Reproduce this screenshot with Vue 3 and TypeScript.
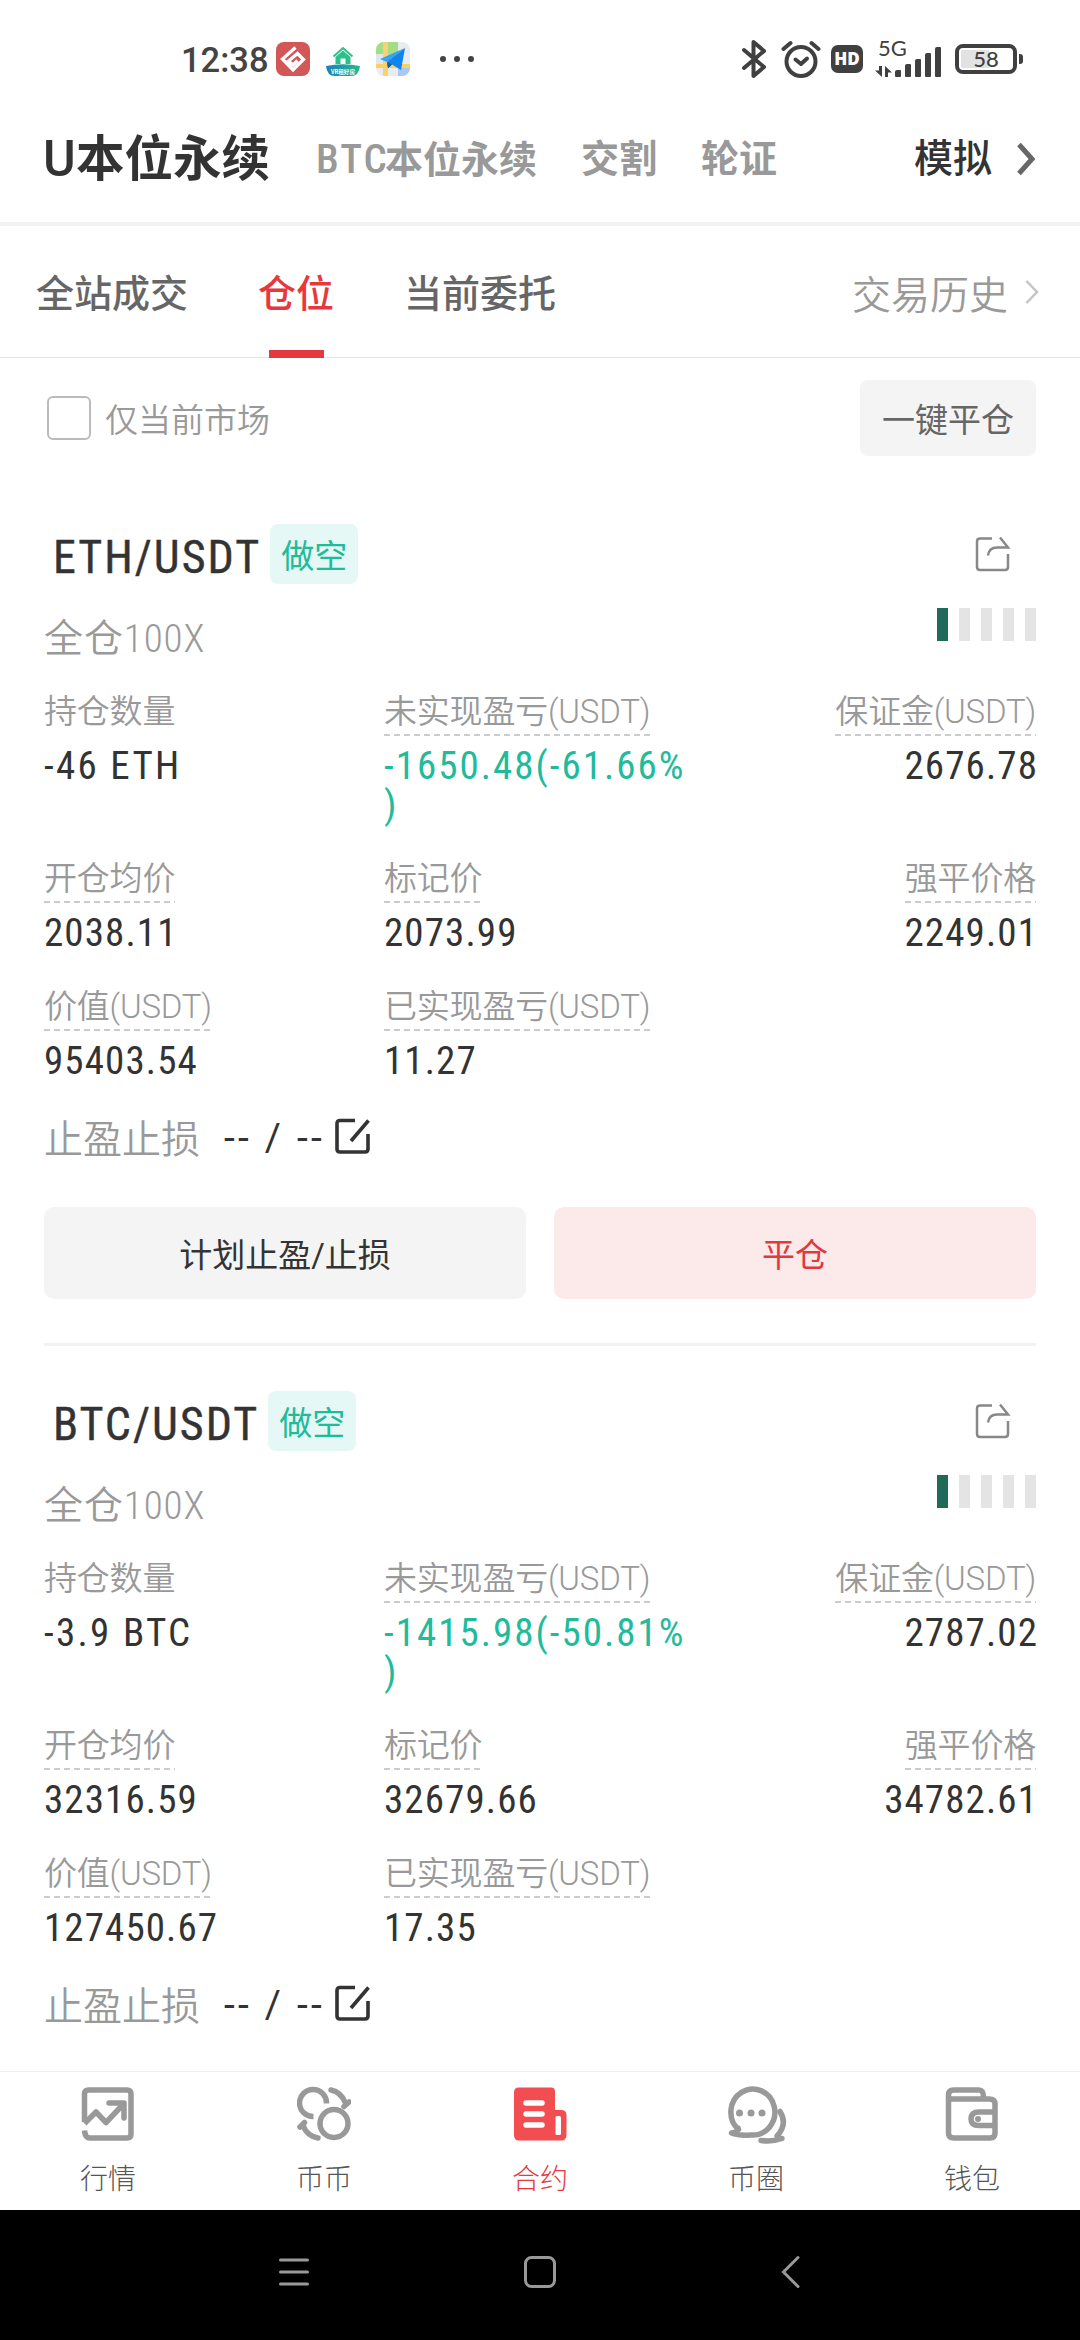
<script setup lang="ts">
interface Market {
  code: string
  name: string
}

interface Metric {
  label: string
  value: string
  dashed: boolean
  tone?: 'gain' | 'amount'
}

interface Position {
  pair: string
  side: string
  leverage: string
  actions: boolean
  metrics: Metric[]
}

const markets: Market[] = [
  { code: 'U', name: '本位永续' },
  { code: 'BTC', name: '本位永续' },
  { code: '', name: '交割' },
  { code: '', name: '轮证' },
]
const orderTabs: string[] = ['全站成交', '仓位', '当前委托']
const signalBars: number[] = [7, 13, 18, 24, 30]

const positions: Position[] = [
  {
    pair: 'ETH/USDT',
    side: '做空',
    leverage: '全仓100X',
    actions: true,
    metrics: [
      { label: '持仓数量', value: '-46 ETH', dashed: false, tone: 'amount' },
      { label: '未实现盈亏(USDT)', value: '-1650.48(-61.66%\n)', dashed: true, tone: 'gain' },
      { label: '保证金(USDT)', value: '2676.78', dashed: true },
      { label: '开仓均价', value: '2038.11', dashed: true },
      { label: '标记价', value: '2073.99', dashed: true },
      { label: '强平价格', value: '2249.01', dashed: true },
      { label: '价值(USDT)', value: '95403.54', dashed: true },
      { label: '已实现盈亏(USDT)', value: '11.27', dashed: true },
    ],
  },
  {
    pair: 'BTC/USDT',
    side: '做空',
    leverage: '全仓100X',
    actions: false,
    metrics: [
      { label: '持仓数量', value: '-3.9 BTC', dashed: false, tone: 'amount' },
      { label: '未实现盈亏(USDT)', value: '-1415.98(-50.81%\n)', dashed: true, tone: 'gain' },
      { label: '保证金(USDT)', value: '2787.02', dashed: true },
      { label: '开仓均价', value: '32316.59', dashed: true },
      { label: '标记价', value: '32679.66', dashed: true },
      { label: '强平价格', value: '34782.61', dashed: true },
      { label: '价值(USDT)', value: '127450.67', dashed: true },
      { label: '已实现盈亏(USDT)', value: '17.35', dashed: true },
    ],
  },
]
</script>

<template>
  <div class="screen">
    <header class="status">
      <div class="status-left">
        <span class="clock">12:38</span>
        <svg class="app-icon" viewBox="0 0 34 34">
          <rect width="34" height="34" rx="8" fill="#d25757" />
          <path d="M19.500 5.500 L6.500 17 L17 28 L27.500 17.500 L21.500 11.500 L12.500 19 L17 23 L21.500 18.500" fill="none" stroke="#fff" stroke-width="3.300" />
        </svg>
        <svg class="app-icon" viewBox="0 0 34 34">
          <path d="M7.500 14.500 L17 6 L26.500 14.500" fill="none" stroke="#2cc08d" stroke-width="2" />
          <path d="M9.500 15 L17 8.500 L24.500 15 V22 H19.500 V16.500 H14.500 V22 H9.500Z" fill="#2cc08d" />
          <path d="M0 24 Q17 20.500 34 24 Q33 34 25 34 H9 Q1 34 0 24Z" fill="url(#vr)" />
          <defs>
            <linearGradient id="vr"><stop stop-color="#1585b8" /><stop offset="1" stop-color="#25b98f" /></linearGradient>
          </defs>
          <text x="17" y="31.500" text-anchor="middle" font-size="5.600" font-weight="700" fill="#fff" class="vr-text">VR租好房</text>
        </svg>
        <svg class="app-icon" viewBox="0 0 34 34">
          <defs><clipPath id="map"><rect width="34" height="34" rx="8" /></clipPath></defs>
          <g clip-path="url(#map)">
            <rect width="34" height="34" fill="#e9ecee" />
            <rect width="22" height="22" fill="#a4dd84" />
            <rect y="12" width="7" height="10" fill="#e2e6e8" />
            <rect x="7" width="5" height="34" fill="#fad075" />
            <rect y="22" width="34" height="4" fill="#fad060" />
            <rect x="22" y="26" width="12" height="8" fill="#a9c8f5" />
          </g>
          <path d="M29 6 L4 17 L11 20Z" fill="#3aa0f5" />
          <path d="M29 6 L11 20 L12 26 L16 22.500 L25 28Z" fill="#0d84ee" />
          <path d="M11 20 L12 26.500 L16 22.500Z" fill="#075fae" />
        </svg>
        <svg class="more" viewBox="0 0 36 8" fill="#444">
          <circle cx="4" cy="4" r="3" /><circle cx="18" cy="4" r="3" /><circle cx="32" cy="4" r="3" />
        </svg>
      </div>
      <div class="status-right">
        <svg width="26" height="40" viewBox="0 0 26 40" fill="none" stroke="#404040" stroke-width="4" stroke-linecap="round" stroke-linejoin="round">
          <path d="M3 11 L23 28 L12.500 37 V3 L23 12 L3 29" />
        </svg>
        <svg class="alarm" width="40" height="38" viewBox="0 0 40 38" fill="none" stroke="#404040" stroke-width="4" stroke-linecap="round">
          <circle cx="20" cy="21.500" r="14.500" />
          <path d="M14.500 19.500 L20 24 L26 18.500" stroke-linejoin="round" />
          <path d="M2.500 9 L9.500 3 M37.500 9 L30.500 3" />
        </svg>
        <span class="hd">HD</span>
        <div class="cell">
          <span class="gen">5G</span>
          <svg width="17" height="11" viewBox="0 0 17 11" fill="#404040">
            <path d="M4 0 H7 V11 L0 4.500 H4Z M10 11 V0 L17 6.500 H13 V11Z" />
          </svg>
        </div>
        <div class="bars">
          <i v-for="h in signalBars" :key="h" :style="{ height: h + 'px' }"></i>
        </div>
        <div class="battery"><span>58</span></div>
        <i class="tip"></i>
      </div>
    </header>

    <nav class="markets">
      <span v-for="(m, i) in markets" :key="m.code + m.name" :class="['market', { current: i === 0 }]"><span v-if="m.code" class="code">{{ m.code }}</span>{{ m.name }}</span>
      <span class="demo">模拟</span>
      <svg class="demo-arrow" width="20" height="34" viewBox="0 0 20 34" fill="none" stroke="#666" stroke-width="5">
        <path d="M3 2.500 L16 17 L3 31.500" />
      </svg>
    </nav>

    <nav class="orders">
      <span v-for="(t, i) in orderTabs" :key="t" :class="['order', { active: i === 1 }]">{{ t }}</span>
      <span class="history">交易历史</span>
      <svg class="history-arrow" width="14" height="24" viewBox="0 0 14 24" fill="none" stroke="#c4c4c4" stroke-width="2.500">
        <path d="M1.500 1 L12 12 L1.500 23" />
      </svg>
    </nav>

    <main class="body">
      <div class="filter">
        <i class="check"></i>
        <span class="filter-text">仅当前市场</span>
        <button class="close-all">一键平仓</button>
      </div>

      <section v-for="p in positions" :key="p.pair" class="card">
        <div class="head">
          <span class="pair">{{ p.pair }}</span>
          <span class="side">{{ p.side }}</span>
          <svg class="share" width="36" height="36" viewBox="0 0 36 36" fill="none" stroke="#888" stroke-width="2.500">
            <path d="M17 2.500 H5 Q2 2.500 2 5.500 V31 Q2 34 5 34 H30 Q33 34 33 31 V18" />
            <path d="M13 19.500 Q14 11.500 22 11.500 H33 L25 1.500" />
          </svg>
        </div>
        <div class="lever">
          <span>{{ p.leverage }}</span>
          <div class="risk"><i v-for="n in 5" :key="n" :class="{ on: n === 1 }"></i></div>
        </div>
        <div class="grid">
          <div v-for="m in p.metrics" :key="m.label" class="metric">
            <span :class="['label', { dashed: m.dashed }]">{{ m.label }}</span>
            <span :class="['value', m.tone]">{{ m.value }}</span>
          </div>
        </div>
        <div class="stop">
          <span class="stop-label">止盈止损</span>
          <span class="stop-value">-- / --</span>
          <svg width="36" height="36" viewBox="0 0 36 36" fill="none" stroke="#333" stroke-width="3.600">
            <path d="M20 2.500 H5 Q2 2.500 2 5.500 V31 Q2 34 5 34 H30 Q33 34 33 31 V16" />
            <path d="M16 23 L33.500 2.500" />
          </svg>
        </div>
        <div v-if="p.actions" class="actions">
          <button class="plan">计划止盈/止损</button>
          <button class="close">平仓</button>
        </div>
      </section>
    </main>

    <footer class="tabs">
      <div class="tab">
        <svg viewBox="0 0 54 56" fill="none" stroke="#999" stroke-width="5.500">
          <path d="M3.500 36 V8 Q3.500 4 7.500 4 H46 Q50 4 50 8 V48 Q50 52 46 52 H9 Q4 52 3.500 44.500" />
          <path d="M3.500 37.500 L15 26 L25 36.500 L43 17.500" stroke-linejoin="round" />
          <path d="M28 17 H43 V32" stroke-linecap="round" stroke-linejoin="round" />
        </svg>
        <span>行情</span>
      </div>
      <div class="tab">
        <svg viewBox="0 0 54 56" fill="none" stroke="#999" stroke-width="5.500">
          <path d="M29.500 17.500 A13.500 13.500 0 1 0 16.500 30.500" />
          <circle cx="37" cy="37.500" r="14" />
          <path d="M34 4 Q44 6 48.500 17 M52 16 L47 20.500" stroke-linecap="round" />
          <path d="M21 52 Q10 50 6 39.500 M3 41 L7.500 36.500" stroke-linecap="round" />
        </svg>
        <span>币币</span>
      </div>
      <div class="tab on">
        <svg viewBox="0 0 54 56">
          <path d="M6 1.500 H38 Q42 1.500 42 5.500 V24 H48 Q53.500 24 53.500 29 V49 Q53.500 54.500 48 54.500 H6 Q1 54.500 1 49 V6.500 Q1 1.500 6 1.500Z" fill="#f24d50" />
          <rect x="42.500" y="30" width="5.500" height="19" rx="1.500" fill="#fff" />
          <path d="M13 17 H29 M13 28 H29 M13 39 H29" stroke="#fff" stroke-width="5.500" stroke-linecap="round" />
        </svg>
        <span>合约</span>
      </div>
      <div class="tab">
        <svg class="wide" viewBox="0 0 62 58" fill="none" stroke="#999" stroke-width="5.500" stroke-linecap="round" stroke-linejoin="round">
          <path d="M13.500 43.500 A22 23 0 1 1 26 49 Q14 50 6.500 47 Q13 46 13 42" />
          <path d="M55 25.500 Q63 38 52 50 Q52 52 57 52.500 Q47 56 36 54.500" />
          <g fill="#999" stroke="none"><circle cx="14.500" cy="27" r="3.500" /><circle cx="26" cy="27" r="3.500" /><circle cx="37" cy="27" r="3.500" /></g>
        </svg>
        <span>币圈</span>
      </div>
      <div class="tab">
        <svg viewBox="0 0 54 56" fill="none" stroke="#999" stroke-width="5.500">
          <path d="M3.500 13 H44 Q50 13 50 18 V47 Q50 52 45 52 H9 Q3.500 52 3.500 47 V9 Q3.500 4 8.500 4 H34 Q38.500 4 38.500 12" />
          <path d="M50 26 H34 Q26 26 26 33 Q26 39.500 34 39.500 H50" />
          <circle cx="33" cy="33" r="3" fill="#999" stroke="none" />
        </svg>
        <span>钱包</span>
      </div>
    </footer>

    <div class="system">
      <svg width="30" height="30" viewBox="0 0 30 30" stroke="#999" stroke-width="3" stroke-linecap="round">
        <path d="M1.500 3 H28.500 M1.500 15 H28.500 M1.500 27 H28.500" />
      </svg>
      <svg class="home" width="34" height="34" viewBox="0 0 34 34" fill="none" stroke="#999" stroke-width="3">
        <rect x="2.500" y="2.500" width="29" height="29" rx="6" />
      </svg>
      <svg width="20" height="34" viewBox="0 0 20 34" fill="none" stroke="#999" stroke-width="3" stroke-linecap="round">
        <path d="M17 2.500 L2.500 17 L17 31.500" />
      </svg>
    </div>
  </div>
</template>

<style>
body {
  background: #fff;
}
</style>

<style scoped>
.screen {
  --din: Roboto, "Noto Sans CJK SC", sans-serif;
  width: 1080px;
  height: 2340px;
  overflow: hidden;
  display: flex;
  flex-direction: column;
  background: #fff;
  color: #333;
  font-family: var(--din);
}
svg { display: block; flex: none; }
button { border: 0; padding: 0; font: inherit; color: inherit; }

.status {
  flex: none;
  height: 118px;
  display: flex;
  justify-content: space-between;
  padding: 0 57px 0 181px;
  box-sizing: border-box;
}
.status-left, .status-right { display: flex; align-items: center; height: 118px; }
.clock { font: 500 34.500px/40px Roboto, sans-serif; color: #444; width: 95px; padding-top: 2px; }
.app-icon { width: 34px; height: 34px; margin-right: 16px; }
.vr-text { font-family: "Noto Sans CJK SC", sans-serif; }
.more { width: 36px; height: 8px; margin-left: 13px; }
.alarm { margin-left: 14px; }
.hd {
  width: 32px; height: 28px; margin-left: 10px; border-radius: 7px; background: #404040;
  color: #fff; font: 800 17px/28px "Open Sans", sans-serif; text-align: center;
}
.cell { width: 18px; height: 38px; margin: 0 0 2px 12px; display: flex; flex-direction: column; justify-content: space-between; }
.gen { font: 400 22px/18px Lato, sans-serif; color: #404040; margin-left: 3px; white-space: nowrap; }
.bars { height: 36px; margin-left: 2px; display: flex; align-items: flex-end; gap: 4px; }
.bars i { width: 6px; background: #404040; border-radius: 2px 1px 1px 1px; }
.battery {
  width: 62px; height: 30px; margin-left: 14px; box-sizing: border-box; border: 4px solid #404040; border-radius: 8px;
  background: linear-gradient(90deg, #e2e2e2 28px, #fff 28px) content-box; padding: 2px;
  display: flex; align-items: center; justify-content: center;
}
.battery span { font: 500 22px/22px Lato, sans-serif; color: #404040; }
.tip { width: 4px; height: 10px; margin-left: 2px; background: #404040; border-radius: 0 3px 3px 0; }

.markets {
  flex: none;
  height: 108px;
  box-sizing: border-box;
  border-bottom: 4px solid #f2f2f2;
  padding: 0 44px 22px 43px;
  display: flex;
  align-items: center;
}
.market { font-size: 38px; font-weight: 700; line-height: 60px; color: #999; margin-right: 44px; white-space: nowrap; }
.market .code { display: inline-block; box-sizing: border-box; width: 71px; padding-left: 2px; font-size: 41px; font-weight: 500; font-stretch: 75%; letter-spacing: 2px; }
.market.current { font-size: 48.500px; color: #333; }
.market.current .code { width: 33px; padding: 0; font-size: 50px; font-weight: 500; font-stretch: 100%; letter-spacing: 0; }
.demo { margin-left: auto; font-size: 39px; font-weight: 500; line-height: 60px; }
.demo-arrow { margin-left: 24px; }

.orders {
  flex: none;
  height: 132px;
  box-sizing: border-box;
  border-bottom: 1px solid #e4e4e4;
  padding: 0 41px 0 36px;
  display: flex;
  align-items: center;
}
.order { position: relative; font-size: 38px; font-weight: 500; color: #666; height: 131px; line-height: 137px; margin-right: 70px; }
.order.active { color: #e6393d; }
.order.active::after {
  content: ""; position: absolute; left: 50%; bottom: -1px; width: 55px; height: 8px; margin-left: -27px; background: #e6393d;
}
.history { margin-left: auto; font-size: 39px; color: #999; font-weight: 350; }
.history-arrow { margin-left: 17px; }

.body { flex: 1; min-height: 0; overflow: hidden; padding: 22px 44px 0; }
.filter { display: flex; align-items: center; height: 76px; margin-bottom: 68px; }
.check { width: 44px; height: 44px; box-sizing: border-box; border: 2px solid #bbb; border-radius: 6px; margin: 0 14px 0 3px; }
.filter-text { font-size: 33px; color: #999; font-weight: 350; }
.close-all { margin-left: auto; width: 176px; height: 76px; border-radius: 8px; background: #f4f4f4; color: #666; font-size: 33px; }

.card { height: 819px; border-bottom: 3px solid #f2f2f2; margin-bottom: 45px; }
.head { display: flex; align-items: center; height: 60px; }
.pair { font: 400 46px/60px Roboto, sans-serif; font-stretch: 75%; letter-spacing: 2px; -webkit-text-stroke: 0.400px #333; padding-top: 5px; margin-left: 9px; white-space: nowrap; }
.side { width: 88px; height: 60px; margin-left: 9px; border-radius: 8px; background: #e6f8f5; color: #1fbb9b; font-size: 33px; line-height: 65px; text-align: center; }
.share { margin: 0 25px 0 auto; }
.lever { display: flex; justify-content: space-between; height: 60px; margin-top: 24px; font-size: 39px; line-height: 62px; color: #999; font-weight: 350; font-stretch: 75%; letter-spacing: 0.900px; }
.risk { display: flex; gap: 11px; }
.risk i { width: 11px; height: 33px; background: #e4e4e4; }
.risk i.on { background: #216a58; }
.grid { display: grid; grid-template-columns: 340px 312px 1fr; margin-top: 20px; row-gap: 20px; }
.metric { display: flex; flex-direction: column; align-items: flex-start; }
.metric:nth-child(3n) { align-items: flex-end; }
.label { font-size: 33px; line-height: 47px; height: 48px; color: #999; font-weight: 350; letter-spacing: -0.200px; }
.label.dashed { background: repeating-linear-gradient(90deg, #ccc 0 6px, transparent 6px 10px) 0 100% / 100% 2px no-repeat; }
.value { font-size: 39px; line-height: 39px; margin-top: 11px; margin-bottom: 10px; font-stretch: 75%; letter-spacing: 1.100px; white-space: pre-line; }
.metric:nth-child(3n) .value { margin-right: -2px; }
.value.gain { color: #1fbb9b; letter-spacing: 2px; }
.value.amount { letter-spacing: 2.300px; }
.stop { display: flex; align-items: center; height: 60px; margin-top: 15px; }
.stop-label { font-size: 39px; color: #999; width: 180px; font-weight: 350; }
.stop-value { font-size: 39px; width: 111px; white-space: pre; letter-spacing: 3.200px; padding-top: 3px; }
.actions { display: flex; gap: 28px; margin-top: 41px; }
.actions button { flex: 1; height: 92px; border-radius: 10px; font-size: 33px; background: #f4f4f4; color: #333; }
.actions .close { background: #fce9ea; color: #e0393e; }

.tabs { flex: none; height: 139px; box-sizing: border-box; border-top: 1px solid #eee; display: flex; background: #fff; }
.tab { flex: 1; display: flex; flex-direction: column; align-items: center; padding-top: 14px; font-size: 28px; line-height: 40px; color: #555; font-weight: 300; }
.tab svg { width: 54px; height: 56px; margin-bottom: 18px; }
.tab svg.wide { width: 62px; height: 58px; margin-bottom: 16px; }
.tab.on { color: #e6393d; }

.system { flex: none; height: 130px; background: #000; display: flex; align-items: center; padding: 0 0 6px 279px; box-sizing: border-box; }
.home { margin: 0 224px 0 214px; }
</style>
